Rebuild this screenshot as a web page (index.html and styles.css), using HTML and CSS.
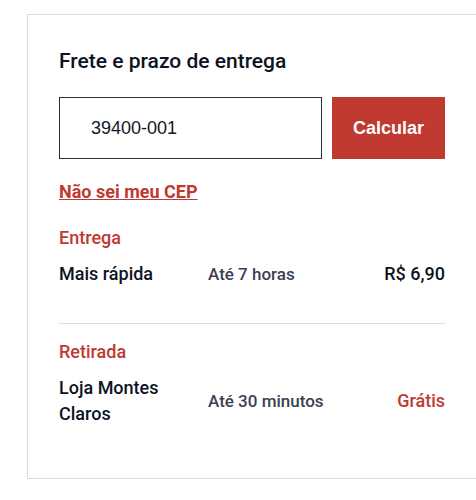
FILE: index.html
```html
<!DOCTYPE html>
<html lang="pt-BR">
<head>
<meta charset="utf-8">
<title>Frete e prazo de entrega</title>
<link rel="stylesheet" href="styles.css">
</head>
<body>
<section class="shipping">
  <h2 class="title"><label for="cep">Frete e prazo de entrega</label></h2>
  <form class="form">
    <input class="cep" id="cep" type="text" value="39400-001">
    <button class="submit" type="button">Calcular</button>
  </form>
  <a class="help" href="#">Não sei meu CEP</a>
  <section class="group">
    <h3 class="kind">Entrega</h3>
    <div class="option">
      <span class="name">Mais rápida</span>
      <span class="time">Até 7 horas</span>
      <span class="price">R$ 6,90</span>
    </div>
  </section>
  <section class="group">
    <h3 class="kind">Retirada</h3>
    <div class="option">
      <span class="name">Loja Montes Claros</span>
      <span class="time">Até 30 minutos</span>
      <span class="price free">Grátis</span>
    </div>
  </section>
</section>
</body>
</html>
```
FILE: styles.css
```css
* {
  box-sizing: border-box;
}

body {
  margin: 0;
  background: #fff;
  color: #0c1424;
  font-family: Roboto, "Liberation Sans", sans-serif;
  font-size: 18px;
  font-weight: 500;
  line-height: 26px;
}

.shipping {
  margin: 14px 0 0 27px;
  padding: 31px 31px 51px;
  border: 1px solid #dcdcdc;
  border-right: 0;
}

.title {
  margin: 0 0 21px;
  font-size: 21px;
  font-weight: 500;
  line-height: 30px;
}

.form {
  display: flex;
  gap: 10px;
  margin: 0 0 20px;
}

.cep {
  flex: 1;
  min-width: 0;
  height: 62px;
  padding: 0 31px;
  border: 1px solid #2a2f40;
  border-radius: 0;
  background: #fff;
  color: #101828;
  font: 18px "Liberation Sans", Arial, sans-serif;
}

.submit {
  padding: 0 21px;
  border: 0;
  background: #c03a31;
  color: #fff;
  font: bold 18px "Liberation Sans", Arial, sans-serif;
}

.help {
  display: block;
  width: fit-content;
  color: #c03a31;
  font-weight: 700;
}

.group {
  padding: 20px 0 36px;
}

.group + .group {
  padding: 15px 0 0;
  border-top: 1px solid #dcdcdc;
}

.kind {
  margin: 0 0 10px;
  color: #c03a31;
  font-size: 18px;
  font-weight: 500;
}

.option {
  display: grid;
  grid-template-columns: 125px 1fr auto;
  column-gap: 24px;
  align-items: center;
}

.time {
  color: #3a4152;
  font-size: 17px;
}

.price {
  text-align: right;
}

.free {
  color: #c03a31;
}
```
